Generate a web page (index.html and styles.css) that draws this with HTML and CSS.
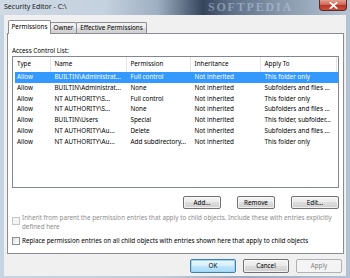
FILE: index.html
```html
<!DOCTYPE html>
<html>
<head>
<meta charset="utf-8">
<link rel="stylesheet" href="styles.css">
</head>
<body>
<div class="window">
  <div class="titlebar">
    <span class="title">Security Editor - C:\</span>
    <span class="watermark">SOFTPEDIA</span>
    <div class="close"><svg width="9" height="7" viewBox="0 0 9 7"><path d="M1.5 0.8 L7.5 6.2 M7.5 0.8 L1.5 6.2" stroke="#fff" stroke-width="1.8" stroke-linecap="square"/></svg></div>
  </div>
  <div class="client">
    <div class="tabs">
      <div class="tab tab-sel tab-perm">Permissions</div>
      <div class="tab tab-owner">Owner</div>
      <div class="tab tab-eff">Effective Permissions</div>
    </div>
    <div class="panel">
      <div class="label">Access Control List:</div>
      <div class="list">
        <div class="row head">
          <div class="cell">Type</div>
          <div class="cell">Name</div>
          <div class="cell">Permission</div>
          <div class="cell">Inheritance</div>
          <div class="cell">Apply To</div>
        </div>
        <div class="row item selected">
          <div class="cell">Allow</div><div class="cell">BUILTIN\Administrat...</div><div class="cell">Full control</div><div class="cell">Not inherited</div><div class="cell">This folder only</div>
        </div>
        <div class="row item">
          <div class="cell">Allow</div><div class="cell">BUILTIN\Administrat...</div><div class="cell">None</div><div class="cell">Not inherited</div><div class="cell">Subfolders and files ...</div>
        </div>
        <div class="row item">
          <div class="cell">Allow</div><div class="cell">NT AUTHORITY\S...</div><div class="cell">Full control</div><div class="cell">Not inherited</div><div class="cell">This folder only</div>
        </div>
        <div class="row item">
          <div class="cell">Allow</div><div class="cell">NT AUTHORITY\S...</div><div class="cell">None</div><div class="cell">Not inherited</div><div class="cell">Subfolders and files ...</div>
        </div>
        <div class="row item">
          <div class="cell">Allow</div><div class="cell">BUILTIN\Users</div><div class="cell">Special</div><div class="cell">Not inherited</div><div class="cell">This folder, subfolder...</div>
        </div>
        <div class="row item">
          <div class="cell">Allow</div><div class="cell">NT AUTHORITY\Au...</div><div class="cell">Delete</div><div class="cell">Not inherited</div><div class="cell">Subfolders and files ...</div>
        </div>
        <div class="row item">
          <div class="cell">Allow</div><div class="cell">NT AUTHORITY\Au...</div><div class="cell">Add subdirectory...</div><div class="cell">Not inherited</div><div class="cell">This folder only</div>
        </div>
      </div>
      <div class="list-buttons">
        <div class="btn btn-add">Add...</div>
        <div class="btn btn-remove">Remove</div>
        <div class="btn btn-edit">Edit...</div>
      </div>
      <div class="check disabled">
        <span class="box"></span>
        <span class="check-text">Inherit from parent the permission entries that apply to child objects. Include these with entries explicitly<br>defined here</span>
      </div>
      <div class="check check-2">
        <span class="box"></span>
        <span class="check-text">Replace permission entries on all child objects with entries shown here that apply to child objects</span>
      </div>
    </div>
    <div class="dialog-buttons">
      <div class="btn btn-dlg btn-default">OK</div>
      <div class="btn btn-dlg">Cancel</div>
      <div class="btn btn-dlg btn-disabled">Apply</div>
    </div>
  </div>
</div>
</body>
</html>
```

FILE: styles.css
```css
* { box-sizing: border-box; }
html, body { margin: 0; padding: 0; }
body {
  width: 350px;
  height: 278px;
  overflow: hidden;
  font-family: "Noto Sans", "Open Sans", sans-serif;
  font-size: 6.3px;
  color: #000;
}
.window {
  width: 350px;
  height: 278px;
  display: flex;
  flex-direction: column;
  background: linear-gradient(90deg, #c6d3e0 0%, #bfcddb 45%, #9aabbf 70%, #b4c3d3 100%);
}
.titlebar {
  height: 15px;
  flex: none;
  position: relative;
  display: flex;
  align-items: flex-start;
  padding-left: 4px;
  background: linear-gradient(90deg, #cfdae5 0%, #c4d1de 30%, #9eafc2 45%, #56677d 54%, #34445a 58%, #5e7088 66%, #8596aa 80%, #a4b4c6 92%, #b8c6d5 100%);
  overflow: hidden;
}
.title {
  font-size: 7px;
  line-height: 14px;
  color: #1a1a1a;
  position: relative;
  z-index: 1;
}
.watermark {
  position: absolute;
  left: 208px;
  top: 1px;
  line-height: 12px;
  font-family: "Liberation Serif", serif;
  font-size: 12px;
  font-weight: bold;
  letter-spacing: 1.8px;
  color: rgba(190, 206, 224, 0.5);
}
.close {
  margin-left: auto;
  margin-right: 3px;
  width: 28px;
  height: 11px;
  border: 1px solid #5a2a26;
  border-top: none;
  border-radius: 0 0 4px 4px;
  background: linear-gradient(180deg, #e3a191 0%, #d0685a 45%, #b8382a 55%, #c9503c 100%);
  display: flex;
  align-items: center;
  justify-content: center;
  position: relative;
  z-index: 1;
}
.client {
  flex: 1;
  margin: 0 4px 2px 4px;
  background: #f0f0f0;
  display: flex;
  flex-direction: column;
  padding: 5px 2px 0 3px;
}
.tabs {
  height: 13px;
  display: flex;
  align-items: flex-end;
  padding-left: 1px;
  position: relative;
  z-index: 1;
}
.tab {
  height: 11px;
  line-height: 10px;
  text-align: center;
  border: 1px solid #8c8e94;
  border-bottom: none;
  background: linear-gradient(180deg, #f2f2f2 0%, #ebebeb 50%, #dddddd 51%, #cfcfcf 100%);
  border-radius: 2px 2px 0 0;
  margin-left: -1px;
  white-space: nowrap;
}
.tab-sel {
  height: 14px;
  line-height: 12px;
  background: #fff;
  margin-bottom: -1px;
  position: relative;
  z-index: 2;
  margin-left: 0;
}
.tab-perm { width: 43px; }
.tab-owner { width: 27px; }
.tab-eff { width: 71px; }
.panel {
  height: 221px;
  flex: none;
  background: #fff;
  border: 1px solid #898c95;
  padding: 12px 4px 0 4px;
  display: flex;
  flex-direction: column;
}
.label {
  line-height: 10px;
  height: 10px;
}
.list {
  height: 132px;
  flex: none;
  border: 1px solid #828790;
  background: #fff;
}
.row {
  display: grid;
  grid-template-columns: 38px 76px 64px 70px 76px;
  white-space: nowrap;
}
.cell {
  overflow: hidden;
  padding-left: 3.5px;
}
.head {
  height: 15px;
  line-height: 14px;
  color: #000;
}
.head .cell {
  border-right: 1px solid #e5e5e5;
}
.head .cell:first-child { padding-left: 4px; }
.item {
  height: 10.75px;
  line-height: 10.75px;
  margin-left: 2px;
  grid-template-columns: 36px 76px 64px 70px 76px;
}
.item .cell:first-child { padding-left: 2px; }
.selected {
  background: #3399ff;
  color: #fff;
}
.list-buttons {
  display: flex;
  justify-content: flex-end;
  gap: 16px;
  margin-top: 8px;
}
.btn {
  height: 13px;
  line-height: 11px;
  text-align: center;
  border: 1px solid #707070;
  border-radius: 2px;
  background: linear-gradient(180deg, #f2f2f2 0%, #ebebeb 45%, #dddddd 50%, #cfcfcf 100%);
  box-shadow: inset 0 0 0 1px rgba(255,255,255,0.7);
}
.btn-add { width: 38px; }
.btn-remove { width: 38px; }
.btn-edit { width: 48px; }
.check {
  display: flex;
  align-items: flex-start;
  margin-top: 5px;
  line-height: 8.5px;
}
.check-2 { margin-top: 5.5px; }
.box {
  width: 8px;
  height: 8px;
  flex: none;
  border: 1px solid #8e8f8f;
  background: linear-gradient(135deg, #dcdcdc 0%, #f5f5f5 60%, #fff 100%);
  margin-top: 3px;
  margin-right: 2px;
}
.check-2 .box { margin-top: 0.5px; }
.check-text { white-space: nowrap; }
.disabled .check-text { color: #8d8d8d; }
.disabled .box {
  border-color: #c6c6c6;
  background: #f4f4f4;
}
.dialog-buttons {
  display: flex;
  justify-content: flex-end;
  gap: 7px;
  margin-top: 5px;
  padding-right: 2px;
}
.btn-dlg {
  width: 46px;
  height: 14px;
  line-height: 12px;
}
.btn-default {
  border-color: #3c7fb1;
  box-shadow: inset 0 0 0 1px #9fd5f5;
  background: linear-gradient(180deg, #eaf6fd 0%, #d9f0fc 45%, #bee6fd 50%, #a7d9f5 100%);
}
.btn-disabled {
  border-color: #adb2b5;
  background: #f4f4f4;
  color: #838383;
  box-shadow: none;
}
```
